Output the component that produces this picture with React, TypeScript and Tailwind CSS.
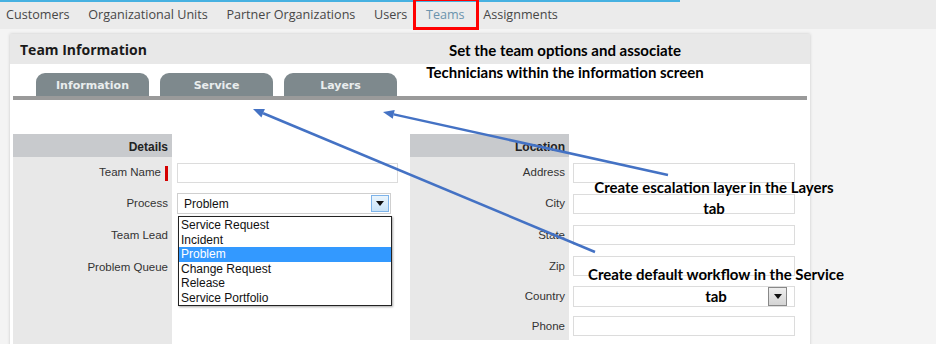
import React from 'react';

const navItems = ['Customers', 'Organizational Units', 'Partner Organizations', 'Users', 'Teams', 'Assignments'];
const tabs = ['Information', 'Service', 'Layers'];
const processOptions = ['Service Request', 'Incident', 'Problem', 'Change Request', 'Release', 'Service Portfolio'];

function Arrow({ x1, y1, x2, y2 }: { x1: number; y1: number; x2: number; y2: number }) {
  const dx = x2 - x1;
  const dy = y2 - y1;
  const len = Math.sqrt(dx * dx + dy * dy);
  const ux = dx / len;
  const uy = dy / len;
  const bx = x2 - ux * 11;
  const by = y2 - uy * 11;
  const nx = -uy * 4.5;
  const ny = ux * 4.5;
  return (
    <g>
      <line x1={x1} y1={y1} x2={bx} y2={by} stroke="#4472c4" strokeWidth={2.5} />
      <polygon points={`${x2},${y2} ${bx + nx},${by + ny} ${bx - nx},${by - ny}`} fill="#4472c4" />
    </g>
  );
}

function DropButton({ light }: { light?: boolean }) {
  return (
    <div
      className={
        light
          ? 'absolute right-[1px] top-[1px] bottom-[1px] w-[18px] flex items-center justify-center border border-[#7eb4ea] bg-gradient-to-b from-[#eaf5fd] to-[#c9e3f8]'
          : 'absolute right-[7px] top-[0px] bottom-[0px] w-[19px] flex items-center justify-center border border-[#888] bg-gradient-to-b from-[#eeeeee] to-[#d4d4d4]'
      }
    >
      <svg width="8" height="5" viewBox="0 0 8 5">
        <polygon points="0,0 8,0 4,5" fill="#111" />
      </svg>
    </div>
  );
}

function Label({ text, required }: { text: string; required?: boolean }) {
  return (
    <div className="flex items-center justify-end pr-[4px] pt-[1px] text-[11.5px] text-[#333]">
      <span>{text}</span>
      {required && <span className="ml-[4px] w-[3px] h-[15px] bg-[#d40000]" />}
    </div>
  );
}

export default function App() {
  const leftRows = [
    { label: 'Team Name', required: true, h: 'h-[31px]' },
    { label: 'Process', h: 'h-[31px]' },
    { label: 'Team Lead', h: 'h-[33px]' },
    { label: 'Problem Queue', h: 'h-[30px]' },
  ];
  const rightRows = [
    { label: 'Address', h: 'h-[31px]' },
    { label: 'City', h: 'h-[31px]' },
    { label: 'State', h: 'h-[32px]' },
    { label: 'Zip', h: 'h-[30px]' },
    { label: 'Country', h: 'h-[30px]', select: true },
    { label: 'Phone', h: 'h-[30px]' },
  ];

  return (
    <div className="relative w-[936px] h-[344px] overflow-hidden bg-[#f4f4f4] font-['Liberation_Sans',Arial,sans-serif]">
      {/* top nav */}
      <nav className="relative h-[29px] bg-[#ebebeb] flex items-center pl-[6px] pt-[1px] gap-[18.6px] font-['Open_Sans',sans-serif] text-[12.6px] text-[#474747]">
        <div className="absolute left-0 top-0 w-[680px] h-[2px] bg-[#46b1e1]" />
        {navItems.map((item) => (
          <span key={item} className={item === 'Teams' ? 'relative text-[#6b93ad]' : 'relative'}>
            {item}
            {item === 'Teams' && (
              <span className="absolute -left-[13px] -right-[14px] -top-[8px] -bottom-[6px] border-[3px] border-[#ff0000]" />
            )}
          </span>
        ))}
      </nav>

      {/* panel */}
      <div className="ml-[10px] mt-[5px] w-[800px] h-[320px] bg-white shadow-[0_0_3px_rgba(0,0,0,0.18)]">
        <div className="h-[30px] bg-[#e8e8e8] flex items-center pl-[10px] font-['Open_Sans',sans-serif] font-bold text-[14px] text-[#1a1a1a]">
          Team Information
        </div>

        <div className="flex gap-[11px] pl-[26px] pt-[9px]">
          {tabs.map((tab) => (
            <div
              key={tab}
              className="w-[113px] h-[23px] pt-[3px] rounded-t-[9px] bg-[#7e898d] flex items-center justify-center font-['DejaVu_Sans',sans-serif] font-bold text-[11px] text-[#e9eded]"
            >
              {tab}
            </div>
          ))}
        </div>
        <div className="mx-[3px] h-[4px] bg-[#9a9a9a]" />

        <div className="flex mt-[34px] px-[3px]">
          {/* Details */}
          <div className="w-[159px] bg-[#e8e8e8] h-[210px]">
            <div className="h-[23px] pt-[2px] bg-[#c8cacd] flex items-center justify-end pr-[4px] font-bold text-[12px] text-[#222]">
              Details
            </div>
            {leftRows.map((r) => (
              <div key={r.label} className={`${r.h} flex items-center justify-end`}>
                <Label text={r.label} required={r.required} />
              </div>
            ))}
          </div>
          <div className="w-[238px] pl-[5px]">
            <div className="h-[23px]" />
            <div className="h-[31px] flex items-center">
              <div className="w-[221px] h-[20px] border border-[#dcdcdc] bg-white" />
            </div>
            <div className="relative h-[31px] flex items-center">
              <div className="relative w-[214px] h-[21px] border border-[#cfcfcf] bg-white flex items-center pl-[6px] text-[12px] text-[#111]">
                Problem
                <DropButton light />
              </div>
              <div className="absolute left-[1px] top-[28px] w-[214px] h-[90px] border border-[#222] bg-white shadow-[1px_1px_2px_rgba(0,0,0,0.35)] pt-[1px] z-10">
                {processOptions.map((o) => (
                  <div
                    key={o}
                    className={
                      o === 'Problem'
                        ? 'h-[14.5px] leading-[14.5px] pl-[2px] text-[12px] bg-[#3399ff] text-white'
                        : 'h-[14.5px] leading-[14.5px] pl-[2px] text-[12px] text-[#111]'
                    }
                  >
                    {o}
                  </div>
                ))}
              </div>
            </div>
          </div>

          {/* Location */}
          <div className="w-[159px] bg-[#e8e8e8] h-[206px]">
            <div className="h-[23px] pt-[2px] bg-[#c8cacd] flex items-center justify-end pr-[4px] font-bold text-[12px] text-[#222]">
              Location
            </div>
            {rightRows.map((r) => (
              <div key={r.label} className={`${r.h} flex items-center justify-end`}>
                <Label text={r.label} />
              </div>
            ))}
          </div>
          <div className="w-[226px] pl-[4px]">
            <div className="h-[23px]" />
            {rightRows.map((r) => (
              <div key={r.label} className={`${r.h} flex items-center`}>
                <div className={`relative w-[222px] ${r.select ? 'h-[21px]' : 'h-[20px]'} border border-[#dcdcdc] bg-white`}>
                  {r.select && <DropButton />}
                </div>
              </div>
            ))}
          </div>
        </div>
      </div>

      {/* annotations */}
      <div className="absolute left-[405px] top-[39px] w-[320px] text-center font-['Lato',sans-serif] font-bold text-[15px] leading-[22px] text-black">
        <div>Set the team options and associate</div>
        <div>Technicians within the information screen</div>
      </div>
      <div className="absolute left-[564px] top-[177px] w-[300px] text-center font-['Lato',sans-serif] font-bold text-[15px] leading-[21px] text-black">
        <div>Create escalation layer in the Layers</div>
        <div>tab</div>
      </div>
      <div className="absolute left-[566px] top-[263px] w-[300px] text-center font-['Lato',sans-serif] font-bold text-[15px] leading-[22px] text-black">
        <div>Create default workflow in the Service</div>
        <div>tab</div>
      </div>

      <svg className="absolute left-0 top-0 pointer-events-none z-20" width="936" height="344">
        <Arrow x1={595} y1={252} x2={253} y2={109} />
        <Arrow x1={668} y1={175} x2={383} y2={112} />
      </svg>
    </div>
  );
}
